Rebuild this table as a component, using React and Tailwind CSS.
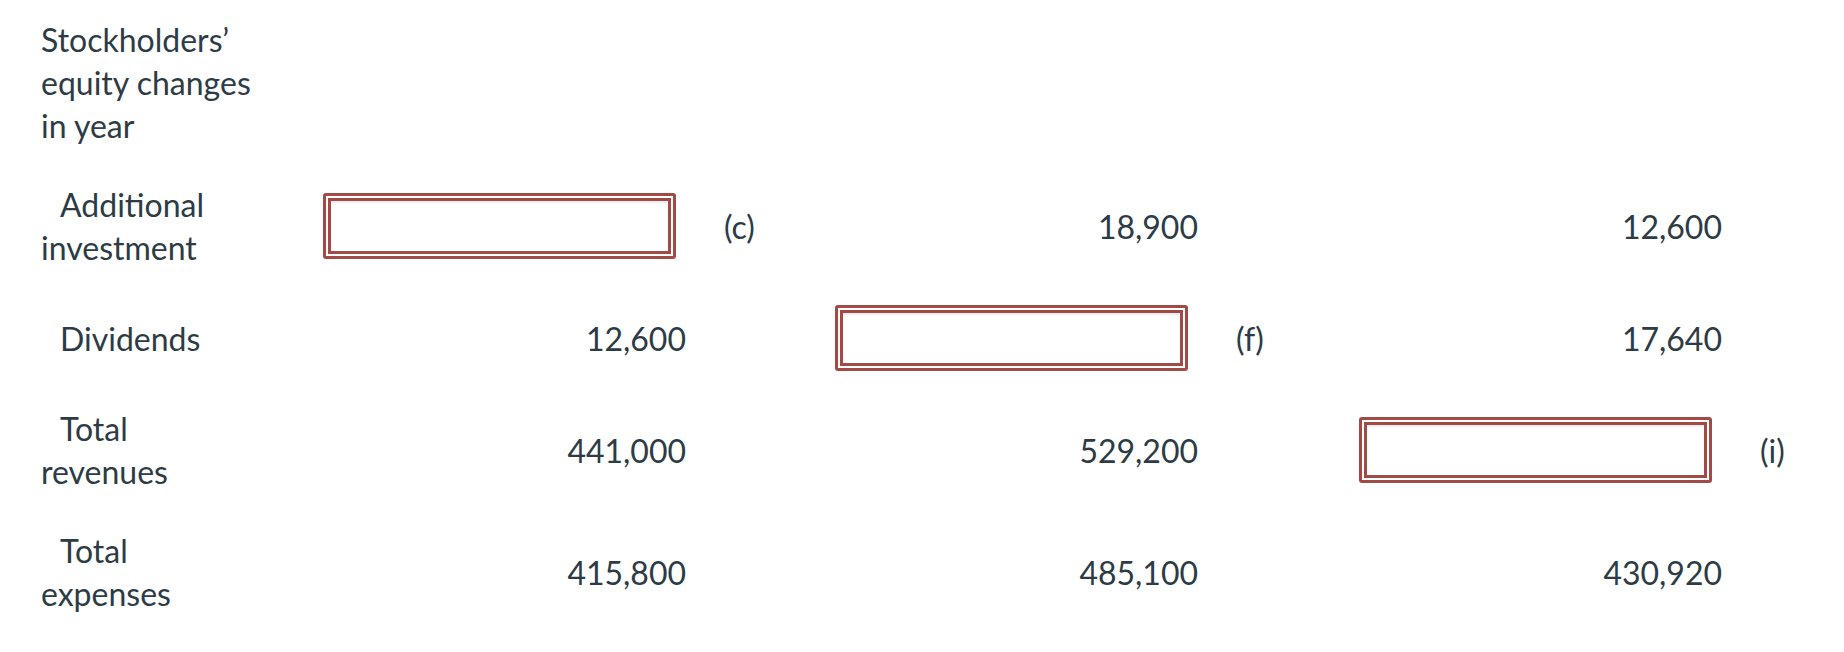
import React from 'react';

const rows = [
    {
        label: ['Additional', 'investment'],
        cells: [{ box: true, mark: '(c)' }, { value: '18,900' }, { value: '12,600' }],
    },
    {
        label: ['Dividends'],
        cells: [{ value: '12,600' }, { box: true, mark: '(f)' }, { value: '17,640' }],
    },
    {
        label: ['Total', 'revenues'],
        cells: [{ value: '441,000' }, { value: '529,200' }, { box: true, mark: '(i)' }],
    },
    {
        label: ['Total', 'expenses'],
        cells: [{ value: '415,800' }, { value: '485,100' }, { value: '430,920' }],
    },
];

const AnswerBox = () => (
    <div className="w-[353px] h-[66px] rounded-[3px] border-[3px] border-[#a24a45] p-[2px]">
        <div className="h-full w-full border-[3px] border-[#a24a45] bg-white shadow-[inset_0_2px_2px_rgba(0,0,0,0.08)]" />
    </div>
);

const Cell = ({ cell }) => {
    if (cell.box) {
        return (
            <div className="flex items-center py-[18px]">
                <AnswerBox />
                <span className="ml-[48px]">{cell.mark}</span>
            </div>
        );
    }
    return (
        <div className="flex items-center py-[18px]">
            <div className="w-[363px] text-right">{cell.value}</div>
        </div>
    );
};

export default function App() {
    return (
        <div
            className="min-h-screen bg-white text-[32px] leading-[43px] text-[#2d3b45]"
            style={{ fontFamily: 'Lato, "Open Sans", sans-serif' }}
        >
            <div className="grid grid-cols-[323px_512px_524px_1fr]">
                <div className="py-[18px] pl-[41px] whitespace-nowrap">
                    Stockholders’<br />equity changes<br />in year
                </div>
                <div />
                <div />
                <div />

                {rows.map((row, i) => (
                    <React.Fragment key={i}>
                        <div className="flex items-center py-[18px] pl-[41px] whitespace-nowrap">
                            <div className="indent-[19px]">
                                {row.label.map((line, j) => (
                                    <React.Fragment key={j}>
                                        {j > 0 && <br />}
                                        {line}
                                    </React.Fragment>
                                ))}
                            </div>
                        </div>
                        {row.cells.map((cell, k) => (
                            <Cell key={k} cell={cell} />
                        ))}
                    </React.Fragment>
                ))}
            </div>
        </div>
    );
}
